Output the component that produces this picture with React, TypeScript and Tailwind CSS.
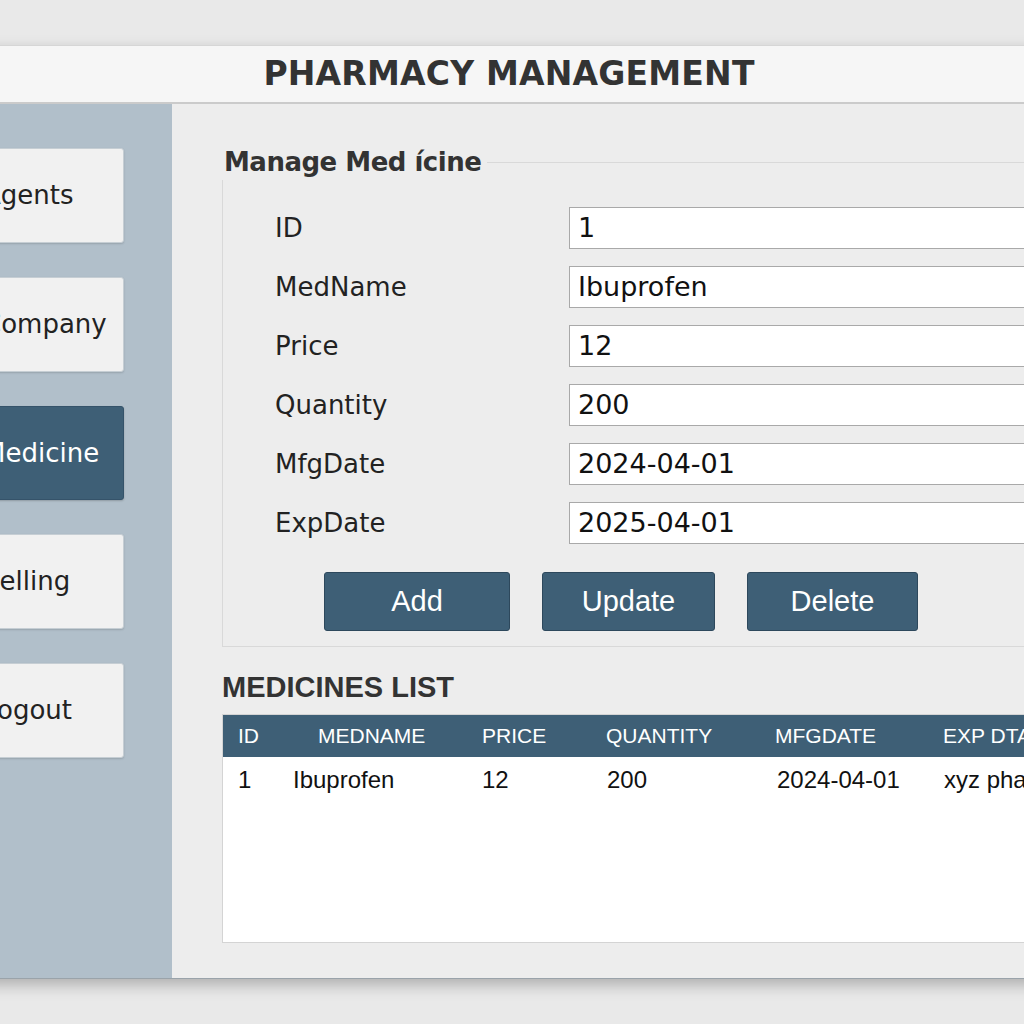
import React from "react";

const navItems = ["Agents", "Company", "Medicine", "Selling", "Logout"];

const fields = [
  { label: "ID", value: "1" },
  { label: "MedName", value: "Ibuprofen" },
  { label: "Price", value: "12" },
  { label: "Quantity", value: "200" },
  { label: "MfgDate", value: "2024-04-01" },
  { label: "ExpDate", value: "2025-04-01" },
];

const columns = [
  { head: "ID", headPad: "pl-[15px]", cell: "1", cellPad: "pl-[15px]" },
  { head: "MEDNAME", headPad: "pl-[25px]", cell: "Ibuprofen", cellPad: "pl-0" },
  { head: "PRICE", headPad: "pl-0", cell: "12", cellPad: "pl-0" },
  { head: "QUANTITY", headPad: "pl-0", cell: "200", cellPad: "pl-[1px]" },
  { head: "MFGDATE", headPad: "pl-0", cell: "2024-04-01", cellPad: "pl-[2px]" },
  { head: "EXP DTAE", headPad: "pl-0", cell: "xyz pharma", cellPad: "pl-[1px]" },
];

export default function App() {
  return (
    <div className="min-h-screen w-full overflow-hidden bg-[#e9e9e9] pt-[45px] font-['DejaVu_Sans',sans-serif]">
      <div className="ml-[-56px] w-[1130px] h-[934px] flex flex-col bg-[#ededed] border-b border-[#9aa3aa] shadow-[0_6px_14px_rgba(0,0,0,0.25)]">
        {/* Title bar */}
        <div className="h-[59px] shrink-0 flex items-center justify-center bg-[#f6f6f6] border-t border-[#d6d6d6] border-b-2 border-b-[#cbcbcb]">
          <h1 className="text-[33px] font-bold tracking-[0.2px] text-[#333]">PHARMACY MANAGEMENT</h1>
        </div>

        <div className="flex flex-1">
          {/* Sidebar */}
          <aside className="w-[228px] shrink-0 bg-[#b1bfca] pt-[44px] pl-[16px] pr-[48px] flex flex-col gap-[34px]">
            {navItems.map((item) => (
              <button
                key={item}
                className={
                  item === "Medicine"
                    ? "h-[94px] w-full rounded-[3px] text-left pl-[22px] text-[26px] text-white bg-[#3e5f76] border border-[#35536a] shadow-[0_1px_2px_rgba(0,0,0,0.2)]"
                    : "h-[95px] w-full rounded-[3px] text-left pl-[22px] text-[26px] text-[#222] bg-[#f1f1f1] border border-[#c6ced4] shadow-[0_1px_2px_rgba(0,0,0,0.15)]"
                }
              >
                {item}
              </button>
            ))}
          </aside>

          {/* Main */}
          <main className="flex-1 pl-[50px] pt-[40px]">
            {/* Fieldset */}
            <div className="flex items-center">
              <span className="pl-[2px] pr-[6px] text-[26px] font-bold text-[#333] leading-[36px] tracking-[-0.5px]">
                Manage Med ícine
              </span>
              <div className="flex-1 h-px bg-[#d9d9d9]" />
            </div>
            <div className="border-l border-r border-b border-[#d9d9d9] pl-[52px] pt-[27px] pb-[15px]">
              <div className="flex flex-col gap-[17px]">
                {fields.map((f) => (
                  <div key={f.label} className="grid grid-cols-[294px_1fr] items-center">
                    <label className="text-[26px] text-[#222]">{f.label}</label>
                    <div className="h-[42px] bg-white border border-[#a9a9a9] flex items-center pl-[8px] text-[27px] text-[#111]">
                      {f.value}
                    </div>
                  </div>
                ))}
              </div>
              <div className="flex gap-[32px] pl-[49px] mt-[28px]">
                {[
                  { t: "Add", w: "w-[186px]" },
                  { t: "Update", w: "w-[173px]" },
                  { t: "Delete", w: "w-[171px]" },
                ].map((b) => (
                  <button
                    key={b.t}
                    className={`${b.w} h-[59px] rounded-[3px] bg-[#3e5f76] border border-[#2d485c] text-white text-[29px] font-['Liberation_Sans',sans-serif]`}
                  >
                    {b.t}
                  </button>
                ))}
              </div>
            </div>

            {/* Table */}
            <h2 className="mt-[22px] text-[29px] font-bold text-[#333] font-['Liberation_Sans',sans-serif] leading-[36px]">
              MEDICINES LIST
            </h2>
            <div className="mt-[9px] h-[229px] bg-white border border-[#d4d4d4] font-['Liberation_Sans',sans-serif]">
              <div className="grid grid-cols-[70px_189px_124px_169px_168px_1fr] h-[42px] bg-[#3e5f76] text-white text-[21px] items-center">
                {columns.map((c) => (
                  <div key={c.head} className={`${c.headPad} whitespace-nowrap`}>
                    {c.head}
                  </div>
                ))}
              </div>
              <div className="grid grid-cols-[70px_189px_124px_169px_168px_1fr] h-[46px] text-[#111] text-[24px] items-center">
                {columns.map((c) => (
                  <div key={c.head} className={`${c.cellPad} whitespace-nowrap`}>
                    {c.cell}
                  </div>
                ))}
              </div>
            </div>
          </main>
        </div>
      </div>
    </div>
  );
}
